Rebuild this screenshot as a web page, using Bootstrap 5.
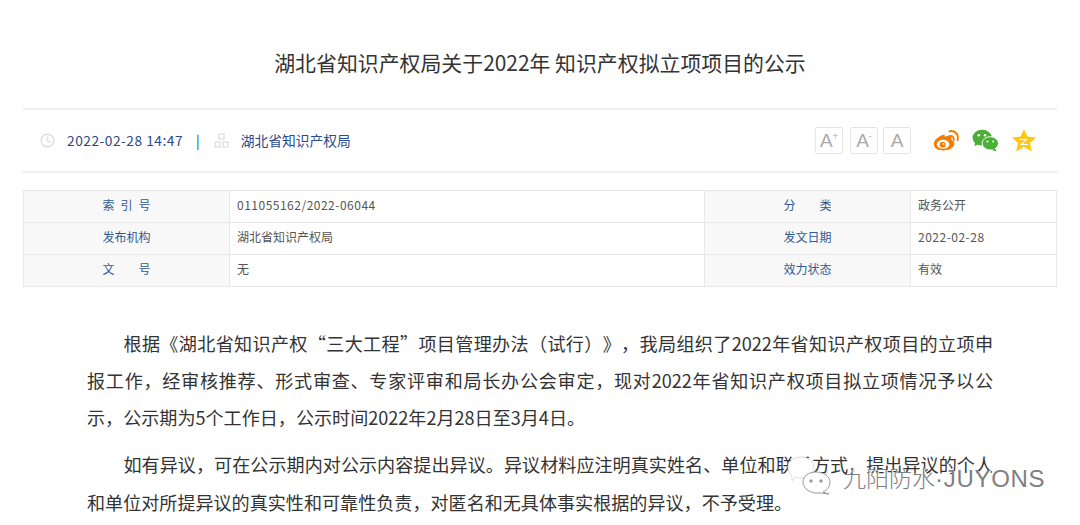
<!DOCTYPE html>
<html lang="zh-CN"><head><meta charset="utf-8">
<link href="https://cdn.jsdelivr.net/npm/bootstrap@5.3.0/dist/css/bootstrap.min.css" rel="stylesheet">
<style>
html,body{height:525px;overflow:hidden;background:#fff}
body{font-family:"Noto Sans CJK SC","Liberation Sans",sans-serif;color:#333;position:relative;text-spacing-trim:space-all}
.wrap{padding:0 23px}
.ttl{font-size:20.9px;font-weight:400;color:#333;text-align:center;margin:0;height:108px;line-height:125px}
.meta{height:65px;border-top:2px solid #f0f0f0;border-bottom:2px solid #f0f0f0;padding:0 17px 1px;color:#2b4a8c;font-size:13.75px}
.dt{letter-spacing:.5px;margin-left:12px}
.sep{margin:0 14px 0 13px;color:#2b4a8c}
.org{margin-left:12px}
.aa{width:28px;height:27px;border:1px solid #e5e5e5;border-radius:2px;color:#aaa;font-family:"Liberation Sans",sans-serif;font-size:19px;line-height:25px;text-align:center}
.aa sup{font-size:9px;top:-8px;position:relative;vertical-align:baseline;line-height:0}
.aa1{margin-right:7px}.aa2{margin-right:5px}.aa3{margin-right:21px}
.wb{margin-right:11px}.wx{margin-right:12px}.st{margin-right:3px}
.info{margin-top:17px;width:1034px;border-collapse:collapse;table-layout:fixed;font-size:12px}
.info td{border:1px solid #e8e8e8;height:32px;padding:0 7px 4px;color:#555;vertical-align:middle}
.info td.lab{background:#f8f8f8;color:#2f5a94;text-align:center;padding:0 0 4px}
.info td.num{letter-spacing:.5px}
.art{padding:0 64px;margin-top:37.5px;font-size:18.08px;line-height:37.3px;color:#333}
.art p{text-indent:36.5px;margin:0 0 10px;text-align:justify}
.wm{position:absolute;left:843px;top:462px;color:#808080;font-size:23px;line-height:30px;text-shadow:1px 1px 0 #fff;font-weight:300;white-space:nowrap}
.wm span{font-family:"Liberation Sans",sans-serif;font-size:24px;letter-spacing:.7px}
.wmi{position:absolute;left:787px;top:456px}
</style></head><body>
<div class="wrap">
<h1 class="ttl">湖北省知识产权局关于2022年 知识产权拟立项项目的公示</h1>
<div class="meta d-flex align-items-center justify-content-between">
 <div class="d-flex align-items-center">
  <svg width="15" height="15" viewBox="0 0 15 15" fill="none" stroke="#ddd" stroke-width="1.4"><circle cx="7.5" cy="7.5" r="6.3"/><path d="M7.5 3.5v4.3l2.6 1.6"/></svg>
  <span class="dt">2022-02-28 14:47</span><span class="sep">|</span>
  <svg width="15" height="15" viewBox="0 0 15 15" fill="none" stroke="#ddd" stroke-width="1.2"><rect x="5" y="1" width="5" height="5"/><rect x="1" y="9" width="5" height="5"/><rect x="9" y="9" width="5" height="5"/></svg>
  <span class="org">湖北省知识产权局</span>
 </div>
 <div class="d-flex align-items-center">
  <div class="aa aa1">A<sup>+</sup></div><div class="aa aa2">A<sup>-</sup></div><div class="aa aa3">A</div>
  <svg class="wb" width="29" height="25" viewBox="0 0 30 26"><path d="M12 7C5 9 1 14 2 18c1 5 8 6 13 5 6-1 9-5 8-8-1-2-3-2-3-3 1-3-1-4-3-4-2 0-3 1-4 1 0-2 0-3-1-2z" fill="#f57c00"/><ellipse cx="11.500" cy="17" rx="6.500" ry="4.700" fill="#fff"/><circle cx="11" cy="17.300" r="3" fill="#f57c00"/><circle cx="11.800" cy="16.600" r=".9" fill="#fff"/><path d="M18 8.500c3-1 5 1 4.500 4M18 3.500c5.500-1.500 10 3 8.500 9" fill="none" stroke="#f57c00" stroke-width="2" stroke-linecap="round"/></svg>
  <svg class="wx" width="27" height="23" viewBox="0 0 28 24"><ellipse cx="10.500" cy="9" rx="10" ry="8.300" fill="#4caf37"/><path d="M3 13l-.5 5 5-2.500z" fill="#4caf37"/><ellipse cx="19" cy="15" rx="8.500" ry="7" stroke="#fff" stroke-width="1" fill="#4caf37"/><path d="M24 20l1.500 3.500-5-1.500z" fill="#4caf37"/><circle cx="7" cy="6.500" r="1.300" fill="#fff"/><circle cx="13.500" cy="6.500" r="1.300" fill="#fff"/><circle cx="16" cy="13" r="1.100" fill="#fff"/><circle cx="22" cy="13" r="1.100" fill="#fff"/></svg>
  <svg class="st" width="26" height="25" viewBox="0 0 26 25"><path d="M13 1l3.500 7.500 8.500 1-6 5.500 1.800 8.500L13 19l-7.800 4.500L7 15 1 9.500l8.500-1z" fill="#fec80f"/><path d="M8 10.500h10l-5.500 5h6l-2 2H7.500l6-5H8z" fill="#fff" stroke="#f2a900" stroke-width=".5"/></svg>
 </div>
</div>
<table class="info">
<colgroup><col style="width:206px"><col style="width:475px"><col style="width:206px"><col></colgroup>
<tr><td class="lab">索&ensp;引&ensp;号</td><td class="num">011055162/2022-06044</td><td class="lab">分&emsp;&emsp;类</td><td>政务公开</td></tr>
<tr><td class="lab">发布机构</td><td>湖北省知识产权局</td><td class="lab">发文日期</td><td class="num">2022-02-28</td></tr>
<tr><td class="lab">文&emsp;&emsp;号</td><td>无</td><td class="lab">效力状态</td><td>有效</td></tr>
</table>
<div class="art">
<p>根据《湖北省知识产权“三大工程”项目管理办法（试行）》，我局组织了2022年省知识产权项目的立项申报工作，经审核推荐、形式审查、专家评审和局长办公会审定，现对2022年省知识产权项目拟立项情况予以公示，公示期为5个工作日，公示时间2022年2月28日至3月4日。</p>
<p>如有异议，可在公示期内对公示内容提出异议。异议材料应注明真实姓名、单位和联系方式，提出异议的个人和单位对所提异议的真实性和可靠性负责，对匿名和无具体事实根据的异议，不予受理。</p>
</div>
</div>
<svg class="wmi" width="46" height="40" viewBox="0 0 46 40" fill="#fff" stroke="#999" stroke-width="1"><path d="M1 11c0-6 6-10 13-10s13 4 13 10-6 11-13 11c-2 0-3 0-5-1l-4 4 0-5c-2-2-4-5-4-9z" stroke="#ddd"/><path d="M16 26c0-6 6-10 13-10s14 4 14 10c0 5-3 8-7 10l6 2-9-1c-9 1-17-4-17-11z"/><circle cx="24" cy="25" r="1.200" fill="#999"/><circle cx="34" cy="25" r="1.200" fill="#999"/></svg>
<div class="wm">九阳防水<span>·JUYONS</span></div>
</body></html>
